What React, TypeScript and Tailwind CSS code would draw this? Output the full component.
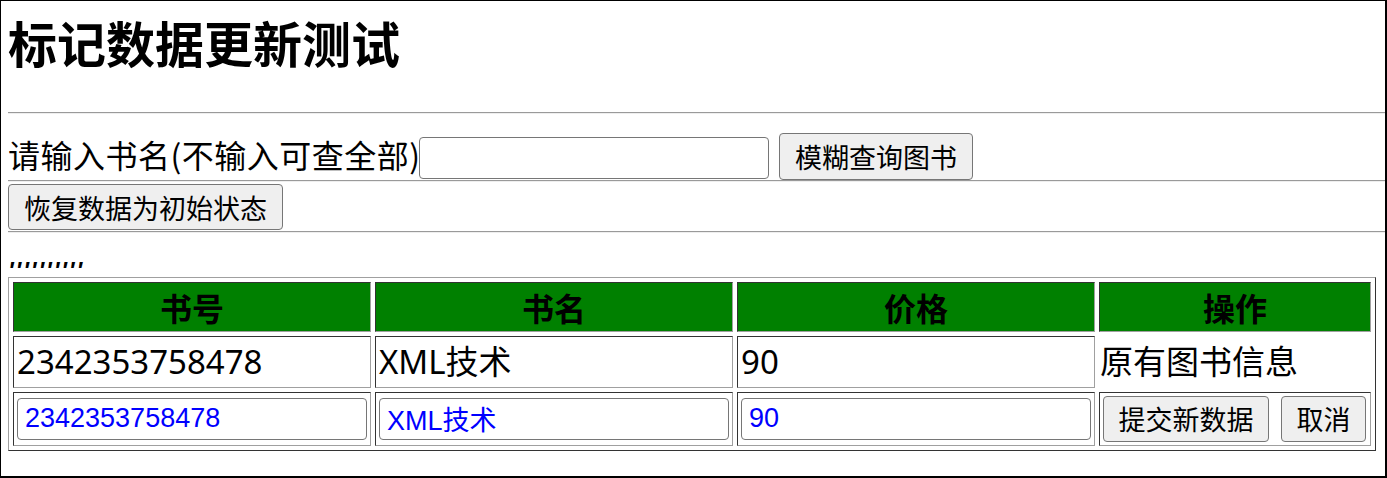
import React from "react";

const cjk = "font-['Noto_Sans_CJK_SC',sans-serif]";

function Hr() {
  return <div className="h-[2px] border-t border-b border-t-[#9a9a9a] border-b-[#eeeeee]" />;
}

const cell =
  "border border-t-[#333333] border-l-[#333333] border-r-[#a0a0a0] border-b-[#a0a0a0] px-[3px] py-0";

const btn =
  "bg-[#efefef] border border-[#767676] rounded-[4px] text-[27px] leading-none text-black flex items-center justify-center " +
  cjk;

const inputCls =
  "w-[350px] h-[42px] bg-white border border-[#767676] rounded-[4px] pl-[7px] text-[27px] text-[#0000ff] font-['Liberation_Sans','Noto_Sans_CJK_SC',sans-serif] outline-none";

const books = [{ id: "2342353758478", name: "XML技术", price: "90" }];

export default function App() {
  return (
    <div className={"w-[1387px] h-[478px] bg-white border-l border-t border-r-2 border-b-2 border-black overflow-hidden pl-[7px] text-black " + cjk}>
      {/* 标题 */}
      <div className="h-[111px] pt-[16px]">
        <h1 className="text-[49px] leading-[49px] font-bold whitespace-nowrap">标记数据更新测试</h1>
      </div>
      <Hr />

      {/* 查询行 */}
      <div className="h-[66px] flex items-end">
        <span className="w-[411px] text-[32px] leading-[42px] mb-[5px] tracking-[0.5px] whitespace-nowrap">请输入书名(不输入可查全部)</span>
        <input className={"mb-[1px] " + inputCls} />
        <button className={"ml-[10px] w-[194px] h-[47px] " + btn}>模糊查询图书</button>
      </div>
      <Hr />

      <div className="h-[49px] pt-[2px]">
        <button className={"w-[275px] h-[46px] " + btn}>恢复数据为初始状态</button>
      </div>
      <Hr />

      <div className="h-[44px] pt-[26px]">
        <span className="block text-[24px] leading-[24px] font-bold italic tracking-[1.9px] font-['Liberation_Sans',sans-serif]">
          ''''''''''
        </span>
      </div>

      {/* 数据表 */}
      <table className="table-fixed w-[1368px] border-separate border-spacing-[4px] border border-t-[#a0a0a0] border-l-[#a0a0a0] border-r-[#333333] border-b-[#333333]">
        <thead>
          <tr>
            {["书号", "书名", "价格", "操作"].map((h, i) => (
              <th
                key={h}
                className={
                  cell +
                  " h-[50px] bg-[#008000] text-[32px] font-bold text-center " +
                  (i === 3 ? "w-[272px]" : "w-[358px]")
                }
              >
                {h}
              </th>
            ))}
          </tr>
        </thead>
        <tbody className="font-['Noto_Sans','Noto_Sans_CJK_SC',sans-serif]">
          {books.map((b) => (
            <React.Fragment key={b.id}>
              <tr>
                <td className={cell + " h-[50px] text-[33px] whitespace-nowrap"}>{b.id}</td>
                <td className={cell + " h-[50px] text-[33px] whitespace-nowrap"}>{b.name}</td>
                <td className={cell + " h-[50px] text-[33px] whitespace-nowrap"}>{b.price}</td>
                <td className="h-[50px] pl-[1px] text-[33px] whitespace-nowrap">原有图书信息</td>
              </tr>
              <tr>
                <td className={cell + " h-[54px] p-[3px]"}>
                  <input className={inputCls} defaultValue={b.id} />
                </td>
                <td className={cell + " h-[54px] p-[3px]"}>
                  <input className={inputCls} defaultValue={b.name} />
                </td>
                <td className={cell + " h-[54px] p-[3px]"}>
                  <input className={inputCls} defaultValue={b.price} />
                </td>
                <td className={cell + " h-[54px] p-[3px]"}>
                  <div className="flex gap-[12px]">
                    <button className={"w-[166px] h-[46px] " + btn}>提交新数据</button>
                    <button className={"w-[85px] h-[46px] " + btn}>取消</button>
                  </div>
                </td>
              </tr>
            </React.Fragment>
          ))}
        </tbody>
      </table>
    </div>
  );
}
